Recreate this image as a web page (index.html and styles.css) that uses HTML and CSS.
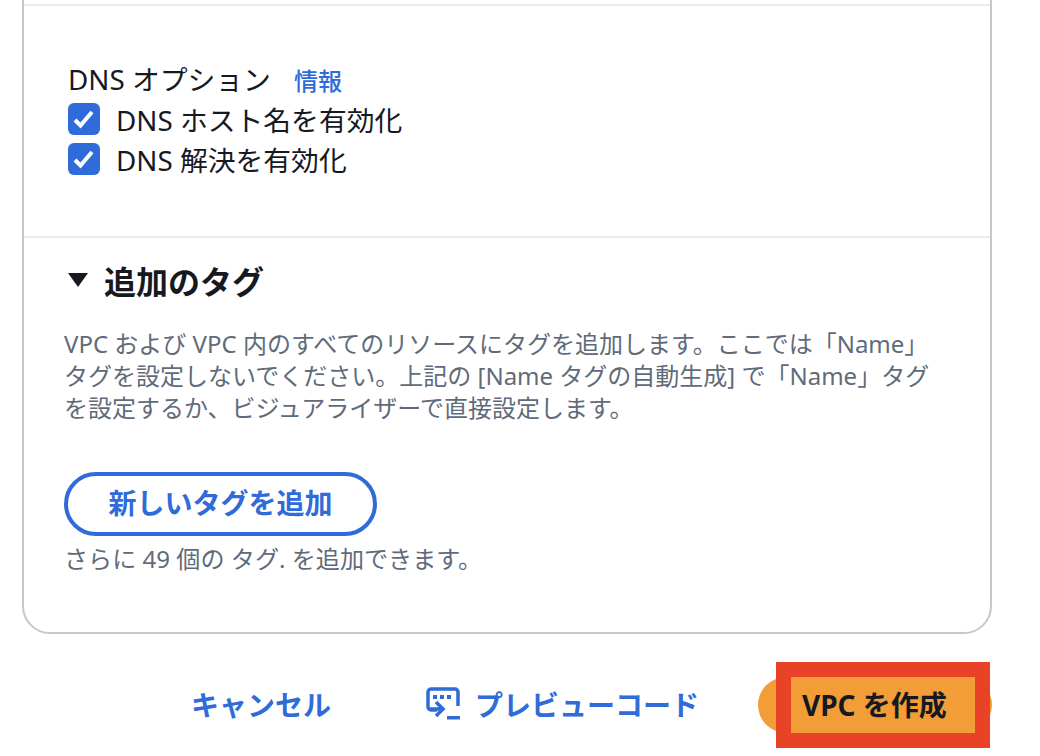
FILE: index.html
```html
<!DOCTYPE html>
<html lang="ja">
  <head>
    <meta charset="utf-8">
    <title>VPC を作成</title>
    <link rel="stylesheet" href="styles.css">
  </head>
  <body>
    <div class="card">
      <div class="top-section"></div>
      <div class="dns-section">
        <div class="field-label">DNS オプション<a href="#" class="info">情報</a></div>
        <label class="check">
          <span class="box">
            <svg viewBox="0 0 32 32" width="32" height="32"><path d="M7 17l5.500 5.500L24 9" fill="none" stroke="#fff" stroke-width="4"/></svg>
          </span>
          DNS ホスト名を有効化
        </label>
        <label class="check">
          <span class="box">
            <svg viewBox="0 0 32 32" width="32" height="32"><path d="M7 17l5.500 5.500L24 9" fill="none" stroke="#fff" stroke-width="4"/></svg>
          </span>
          DNS 解決を有効化
        </label>
      </div>
      <div class="tags-section">
        <h2 class="tags-title"><span class="caret"></span>追加のタグ</h2>
        <p class="tags-desc">VPC および VPC 内のすべてのリソースにタグを追加します。ここでは「Name」<br>タグを設定しないでください。上記の [Name タグの自動生成] で「Name」タグ<br>を設定するか、ビジュアライザーで直接設定します。</p>
        <button class="btn-outline">新しいタグを追加</button>
        <p class="tags-hint">さらに 49 個の タグ. を追加できます。</p>
      </div>
    </div>
    <div class="footer">
      <a href="#" class="link cancel">キャンセル</a>
      <a href="#" class="link preview">
        <svg viewBox="0 0 34 34" width="34" height="34">
          <path d="M11 23H5a3 3 0 0 1-3-3V5a3 3 0 0 1 3-3h24a3 3 0 0 1 3 3v14" fill="none" stroke="#2f6bd9" stroke-width="3.500"/>
          <path d="M7 8h4v4H7zM14 8h4v4h-4zM21 8h4v4h-4z" fill="#2f6bd9"/>
          <path d="M10 15l7 7-7 7M4 22h12" fill="none" stroke="#2f6bd9" stroke-width="3.500"/>
          <path d="M21 29h13v3.500H21z" fill="#2f6bd9"/>
        </svg>
        プレビューコード
      </a>
      <div class="primary-wrap">
        <button class="btn-primary"><span class="btn-label">VPC を作成</span></button>
        <span class="highlight"></span>
      </div>
    </div>
  </body>
</html>
```

FILE: styles.css
```css
body {
  margin: 0;
  background: #fff;
  color: #16191f;
  font-family: "Noto Sans", "Noto Sans CJK JP", sans-serif;
}
.card {
  box-sizing: border-box;
  width: 970px;
  height: 674px;
  margin: -40px 0 0 22px;
  border: 2px solid #c6c6cd;
  border-radius: 28px;
}
.top-section {
  height: 42px;
  border-bottom: 2px solid #e9ebed;
}
.dns-section {
  box-sizing: border-box;
  height: 232px;
  padding: 55px 0 0 44px;
  border-bottom: 2px solid #e9ebed;
}
.field-label {
  height: 38px;
  font-size: 27.8px;
  line-height: 36px;
}
.info {
  margin-left: 23px;
  color: #2f6bd9;
  font-size: 24px;
  font-weight: 500;
  text-decoration: none;
}
.check {
  display: flex;
  align-items: center;
  gap: 16px;
  height: 40px;
  font-size: 27.8px;
}
.box {
  width: 32px;
  height: 32px;
  border-radius: 6px;
  background: #2f6bd9;
}
.box svg {
  display: block;
}
.tags-section {
  padding: 21px 0 0 40px;
}
.tags-title {
  display: flex;
  align-items: center;
  margin: 0;
  height: 42px;
  font-size: 32px;
  font-weight: 700;
}
.caret {
  width: 0;
  height: 0;
  margin: 0 16px 0 4px;
  border-left: 10px solid transparent;
  border-right: 10px solid transparent;
  border-top: 14px solid #16191f;
}
.tags-desc {
  margin: 27px 0 0;
  color: #5f6b7a;
  font-size: 24px;
  line-height: 32px;
}
.btn-outline {
  display: block;
  box-sizing: border-box;
  width: 313px;
  height: 64px;
  margin-top: 48px;
  border: 4px solid #2f6bd9;
  border-radius: 32px;
  background: #fff;
  color: #2f6bd9;
  font-family: inherit;
  font-size: 28px;
  font-weight: 700;
  padding: 0 0 4px;
}
.tags-hint {
  margin: 6px 0 0;
  color: #5f6b7a;
  font-size: 24.1px;
  line-height: 34px;
}
.footer {
  display: flex;
  align-items: center;
  width: 992px;
  height: 56px;
  margin: 43px 0 23px;
}
.link {
  padding-bottom: 2px;
  color: #2f6bd9;
  font-size: 28px;
  font-weight: 700;
  text-decoration: none;
}
.cancel {
  margin-left: 191px;
}
.preview {
  display: flex;
  align-items: center;
  gap: 15px;
  margin-left: 95px;
}
.primary-wrap {
  position: relative;
  margin-left: auto;
}
.btn-primary {
  display: block;
  box-sizing: border-box;
  width: 234px;
  height: 56px;
  padding: 0 0 2px 44px;
  border: 0;
  border-radius: 28px;
  background: #f29d38;
  color: #16191f;
  font-family: inherit;
  font-size: 28px;
  font-weight: 700;
  text-align: left;
}
.btn-label {
  position: relative;
  z-index: 1;
}
.highlight {
  position: absolute;
  top: -15px;
  left: 18px;
  width: 184px;
  height: 56px;
  border: 15px solid #e94327;
  background: #f29d38;
}
```
